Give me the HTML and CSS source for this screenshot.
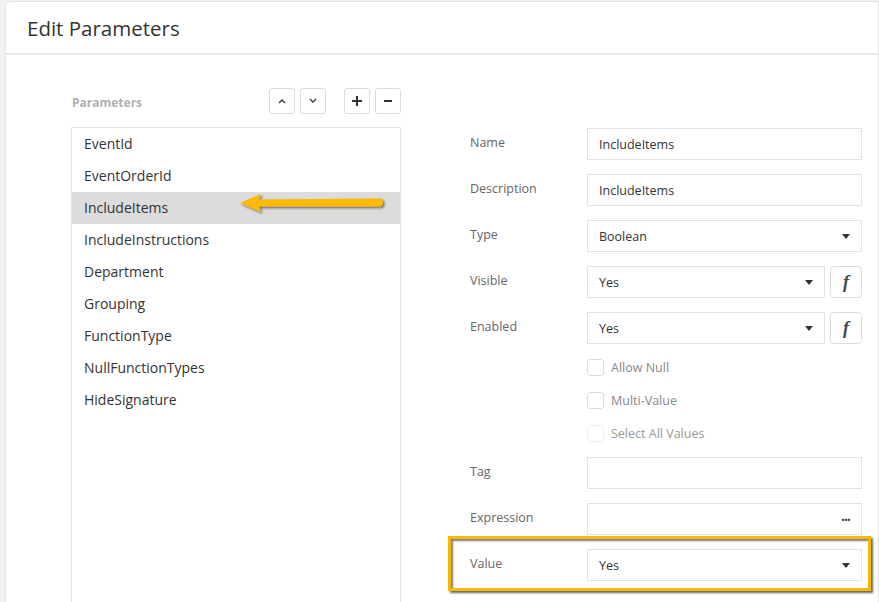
FILE: index.html
```html
<!DOCTYPE html>
<html lang="en">

<head>
    <meta charset="UTF-8">
    <meta name="viewport" content="width=device-width, initial-scale=1.0">
    <title>Edit Parameters</title>
    <link rel="stylesheet" href="styles.css">
</head>

<body>
    <div class="dialog">
        <div class="dialog-header">
            <h1>Edit Parameters</h1>
        </div>

        <div class="dialog-body">
            <div class="params-column">
                <div class="params-toolbar">
                    <span class="params-title">Parameters</span>
                    <div class="tool-group">
                        <button class="tool-btn" title="Move up">
                            <svg width="8" height="6" viewBox="0 0 8 6"><path d="M1 5 L4 2 L7 5" fill="none" stroke="#333" stroke-width="1.3"/></svg>
                        </button>
                        <button class="tool-btn" title="Move down">
                            <svg width="8" height="6" viewBox="0 0 8 6"><path d="M1 1 L4 4 L7 1" fill="none" stroke="#333" stroke-width="1.3"/></svg>
                        </button>
                    </div>
                    <div class="tool-group">
                        <button class="tool-btn" title="Add">
                            <svg width="12" height="12" viewBox="0 0 12 12"><path d="M6 1 V11 M1 6 H11" stroke="#333" stroke-width="2"/></svg>
                        </button>
                        <button class="tool-btn" title="Remove">
                            <svg width="10" height="12" viewBox="0 0 10 12"><path d="M1 6 H9" stroke="#333" stroke-width="2"/></svg>
                        </button>
                    </div>
                </div>

                <div class="params-list">
                    <div class="param-item">EventId</div>
                    <div class="param-item">EventOrderId</div>
                    <div class="param-item selected">IncludeItems</div>
                    <div class="param-item">IncludeInstructions</div>
                    <div class="param-item">Department</div>
                    <div class="param-item">Grouping</div>
                    <div class="param-item">FunctionType</div>
                    <div class="param-item">NullFunctionTypes</div>
                    <div class="param-item">HideSignature</div>

                    <!-- annotation arrow pointing at the selected row -->
                    <svg class="callout-arrow" width="152" height="30" viewBox="0 0 152 30">
                        <defs>
                            <filter id="arrowShadow" x="-10%" y="-40%" width="120%" height="180%">
                                <feDropShadow dx="1.5" dy="1.5" stdDeviation="1" flood-color="#000" flood-opacity="0.55"/>
                            </filter>
                        </defs>
                        <path d="M2 15 L23 6 L21 11.5 L141 10.5 A4 4 0 0 1 141 18.5 L21 18.5 L23 24 Z" fill="#fbb900" filter="url(#arrowShadow)"/>
                    </svg>
                </div>
            </div>

            <div class="props-column">
                <div class="form-row">
                    <label>Name</label>
                    <div class="text-input">IncludeItems</div>
                </div>
                <div class="form-row">
                    <label>Description</label>
                    <div class="text-input">IncludeItems</div>
                </div>
                <div class="form-row">
                    <label>Type</label>
                    <div class="text-input select">Boolean<span class="caret"></span></div>
                </div>
                <div class="form-row">
                    <label>Visible</label>
                    <div class="text-input select">Yes<span class="caret"></span></div>
                    <button class="fx-btn">f</button>
                </div>
                <div class="form-row">
                    <label>Enabled</label>
                    <div class="text-input select">Yes<span class="caret"></span></div>
                    <button class="fx-btn">f</button>
                </div>

                <div class="check-row">
                    <span class="checkbox"></span>Allow Null
                </div>
                <div class="check-row">
                    <span class="checkbox"></span>Multi-Value
                </div>
                <div class="check-row disabled">
                    <span class="checkbox"></span>Select All Values
                </div>

                <div class="form-row">
                    <label>Tag</label>
                    <div class="text-input"></div>
                </div>
                <div class="form-row">
                    <label>Expression</label>
                    <div class="text-input">
                        <span class="dots">&middot;&middot;&middot;</span>
                    </div>
                </div>
                <div class="form-row">
                    <label>Value</label>
                    <div class="text-input select">Yes<span class="caret"></span></div>
                </div>

                <!-- annotation frame around the Value row -->
                <div class="callout-frame"></div>
            </div>
        </div>
    </div>
</body>

</html>
```

FILE: styles.css
```css
body {
    margin: 0;
    background: #f1f1f1;
    font-family: "Open Sans", "Noto Sans", Arial, sans-serif;
    color: #333;
    overflow: hidden;
    height: 602px;
}

.dialog {
    margin: 1px 0 0 5px;
    background: #fff;
    border: 1px solid #e4e4e4;
    border-radius: 5px 0 0 0;
    height: 700px;
}

.dialog-header {
    height: 51px;
    border-bottom: 2px solid #e8e8e8;
    display: flex;
    align-items: center;
    padding-left: 21px;
}

.dialog-header h1 {
    margin: 0;
    font-size: 20.5px;
    font-weight: normal;
    color: #333;
}

.dialog-body {
    display: flex;
    padding: 33px 0 0 65px;
}

.params-column {
    width: 330px;
}

.params-toolbar {
    display: flex;
    align-items: center;
    height: 26px;
    margin-bottom: 13px;
}

.params-title {
    flex: 1;
    font-size: 12px;
    font-weight: bold;
    color: #b0b0b0;
    padding-left: 1px;
    padding-top: 2px;
}

.tool-group {
    display: flex;
    gap: 5px;
    margin-left: 18px;
}

.tool-btn {
    width: 26px;
    height: 26px;
    padding: 0;
    border: 1px solid #dcdcdc;
    border-radius: 3px;
    background: #fff;
    display: flex;
    align-items: center;
    justify-content: center;
}

.params-list {
    position: relative;
    border: 1px solid #e6e6e6;
    height: 520px;
}

.param-item {
    height: 32px;
    line-height: 31px;
    padding-left: 12px;
    font-size: 14px;
    color: #333;
}

.param-item.selected {
    background: #dcdcdc;
}

.callout-arrow {
    position: absolute;
    left: 166px;
    top: 60px;
}

.props-column {
    position: relative;
    margin-left: 69px;
    padding-top: 40px;
    width: 392px;
    display: flex;
    flex-direction: column;
}

.form-row {
    display: flex;
    align-items: center;
    height: 32px;
    margin-bottom: 14px;
}

.form-row label {
    width: 117px;
    flex-shrink: 0;
    font-size: 12.5px;
    color: #666;
    padding-bottom: 4px;
}

.text-input {
    flex: 1;
    height: 30px;
    border: 1px solid #e2e2e2;
    display: flex;
    align-items: center;
    padding: 0 11px;
    font-size: 12.5px;
    color: #333;
}

.select {
    justify-content: space-between;
}

.caret {
    width: 0;
    height: 0;
    border-left: 4.5px solid transparent;
    border-right: 4.5px solid transparent;
    border-top: 5px solid #333;
}

.dots {
    margin-left: auto;
    font-size: 14px;
    font-weight: bold;
    letter-spacing: -1px;
    color: #444;
}

.fx-btn {
    width: 32px;
    height: 32px;
    margin-left: 5px;
    padding: 0;
    border: 1px solid #dcdcdc;
    border-radius: 4px;
    background: #fff;
    font-family: "Liberation Serif", "DejaVu Serif", serif;
    font-style: italic;
    font-weight: bold;
    font-size: 18px;
    color: #444;
}

.check-row {
    display: flex;
    align-items: center;
    height: 18px;
    margin: 0 0 15px 117px;
    font-size: 12.5px;
    color: #888;
}

.checkbox {
    width: 15px;
    height: 15px;
    border: 1px solid #ddd;
    border-radius: 3px;
    margin-right: 7px;
}

.check-row.disabled {
    color: #999;
}

.check-row.disabled .checkbox {
    border-color: #eee;
}

.callout-frame {
    position: absolute;
    left: -22px;
    right: -9px;
    top: 448px;
    height: 49px;
    border: 3px solid #fbb800;
    box-shadow: 2px 2px 2px rgba(0, 0, 0, 0.6), inset 2px 2px 2px rgba(0, 0, 0, 0.5);
}
```
